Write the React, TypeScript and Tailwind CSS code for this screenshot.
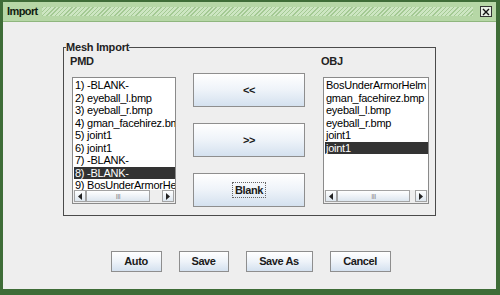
import type { ReactNode } from 'react'

const pmdItems = [
  '1) -BLANK-',
  '2) eyeball_l.bmp',
  '3) eyeball_r.bmp',
  '4) gman_facehirez.bmp',
  '5) joint1',
  '6) joint1',
  '7) -BLANK-',
  '8) -BLANK-',
  '9) BosUnderArmorHelm',
]

const objItems = ['BosUnderArmorHelm', 'gman_facehirez.bmp', 'eyeball_l.bmp', 'eyeball_r.bmp', 'joint1', 'joint1']

function ScrollArrow({ dir }: { dir: 'left' | 'right' }) {
  return (
    <div className="flex h-full w-[12px] items-center justify-center border border-[#a3a3a3] bg-gradient-to-b from-white to-[#dde6ef]">
      <svg width="4" height="7" viewBox="0 0 4 7">
        {dir === 'left' ? <path d="M4 0 L0 3.5 L4 7 Z" fill="#222" /> : <path d="M0 0 L4 3.5 L0 7 Z" fill="#222" />}
      </svg>
    </div>
  )
}

function HScroll({ thumb }: { thumb: string }) {
  return (
    <div className="flex h-[13px] shrink-0 items-stretch bg-[#eeeeee] px-[1px] pb-[1px]">
      <ScrollArrow dir="left" />
      <div className="flex flex-1 items-stretch">
        <div className={`flex items-center justify-center border border-[#a3a3a3] bg-gradient-to-b from-white to-[#dde6ef] ${thumb}`}>
          <span className="text-[7px] leading-none tracking-[-0.5px] text-[#888]">III</span>
        </div>
      </div>
      <ScrollArrow dir="right" />
    </div>
  )
}

function ListBox({
  items,
  selected,
  width,
  thumb,
}: {
  items: string[]
  selected: number
  width: string
  thumb: string
}) {
  return (
    <div className={`flex h-[127px] flex-col border border-[#8a8a8a] bg-white ${width}`}>
      <div className="flex-1 overflow-hidden pl-[1px] pt-[1px]">
        {items.map((item, i) => (
          <div
            key={i}
            className={`h-[12.5px] whitespace-nowrap pl-[1px] text-[11px] leading-[12.5px] tracking-[-0.25px] ${
              i === selected ? 'bg-[#333333] text-white' : 'text-black'
            }`}
          >
            {item}
          </div>
        ))}
      </div>
      <HScroll thumb={thumb} />
    </div>
  )
}

function Button({ children, className }: { children: ReactNode; className: string }) {
  return (
    <button
      type="button"
      className={`flex items-center justify-center border border-[#8e8e8e] bg-gradient-to-b from-white via-[#eef3f9] to-[#d4e1ef] text-[11px] font-bold tracking-[-0.4px] text-[#1a1a1a] ${className}`}
    >
      {children}
    </button>
  )
}

export default function App() {
  return (
    <div className="flex h-[295px] w-[500px] flex-col bg-[#3e6c37] pb-[6px] pl-[3px] pr-[4px] pt-[2px] font-['Liberation_Sans',Arial,sans-serif] text-[11px] text-black">
      <div className="flex h-[19px] items-center bg-[#b6d7a6] pl-[4px] pr-[3px]">
        <span className="text-[11px] font-bold tracking-[-0.6px] text-[#102010]">Import</span>
        <div className="ml-[4px] mr-[7px] h-[9px] flex-1 bg-[repeating-linear-gradient(135deg,#a3c993_0px,#a3c993_1px,#cde6c2_1px,#cde6c2_3px)]" />
        <div className="flex h-[11px] w-[12px] items-center justify-center border border-[#333] bg-[#e8efe5]">
          <svg width="8" height="8" viewBox="0 0 8 8">
            <path d="M1 1 L7 7 M7 1 L1 7" stroke="#111" strokeWidth="1.4" />
          </svg>
        </div>
        <div className="w-[1px]" />
      </div>
      <div className="h-[1px] bg-[#8fb67e]" />
      <div className="flex flex-1 flex-col bg-[#eeeeee]">
        <fieldset className="ml-[60px] mt-[19px] h-[175px] w-[372px] border border-[#4a4a4a] px-[6px] pb-[6px]">
          <legend className="ml-[-4px] px-0 text-[11px] font-bold leading-[12px] tracking-[-0.2px] text-[#222]">
            Mesh Import
          </legend>
          <div className="flex items-start">
            <div className="flex flex-col">
              <div className="h-[14px] pt-[1px] text-[11px] font-bold leading-[14px] tracking-[-0.2px] text-[#222]">PMD</div>
              <div className="ml-[2px] mt-[10px]">
                <ListBox items={pmdItems} selected={7} width="w-[104px]" thumb="w-[64px]" />
              </div>
            </div>
            <div className="ml-[17px] mt-[20px] flex flex-col gap-[16px]">
              <Button className="h-[34px] w-[112px]">&lt;&lt;</Button>
              <Button className="h-[34px] w-[112px]">&gt;&gt;</Button>
              <Button className="h-[34px] w-[112px]">
                <span className="border border-dotted border-[#666] px-[2px] leading-[14px]">Blank</span>
              </Button>
            </div>
            <div className="ml-[16px] flex flex-col">
              <div className="h-[14px] pt-[1px] text-[11px] font-bold leading-[14px] tracking-[-0.2px] text-[#222]">OBJ</div>
              <div className="ml-[2px] mt-[10px]">
                <ListBox items={objItems} selected={5} width="w-[106px]" thumb="w-[73px]" />
              </div>
            </div>
          </div>
        </fieldset>
        <div className="mt-[35px] flex justify-center gap-[17px] pl-[2px]">
          <Button className="h-[21px] w-[51px]">Auto</Button>
          <Button className="h-[21px] w-[50px]">Save</Button>
          <Button className="h-[21px] w-[67px]">Save As</Button>
          <Button className="h-[21px] w-[61px]">Cancel</Button>
        </div>
      </div>
    </div>
  )
}
